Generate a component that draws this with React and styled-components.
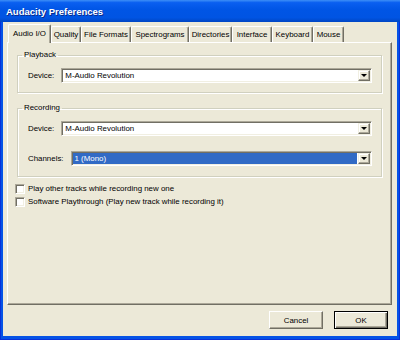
import React from "react";
import styled, { createGlobalStyle } from "styled-components";

const GlobalStyle = createGlobalStyle`
  * { box-sizing: border-box; }
  body {
    margin: 0;
    background: #fff;
    font-family: "Liberation Sans", Arial, sans-serif;
  }
`;

const UI_FONT = `"Liberation Sans", Arial, sans-serif`;

const Window = styled.div`
  width: 400px;
  height: 340px;
  display: flex;
  flex-direction: column;
  background: #0553e6;
  box-shadow: inset 1px 0 0 #0831d9, inset -1px 0 0 #0831d9, inset 0 -1px 0 #0831d9;
  overflow: hidden;
`;

const TitleBar = styled.div`
  height: 22px;
  flex: none;
  display: flex;
  align-items: center;
  padding-left: 6px;
  background: linear-gradient(to bottom, #3d8ff7 0%, #0a5ff0 12%, #0055e5 45%, #0054e3 80%, #0046c4 100%);
  color: #fff;
  font: bold 9.5px ${UI_FONT};
  text-shadow: 1px 1px 0 #0a2a8a;
`;

const Client = styled.div`
  flex: 1;
  margin: 0 3px 4px 3px;
  background: #ece9d8;
  display: flex;
  flex-direction: column;
  padding: 2px 5px 0 4px;
  font: 7.9px ${UI_FONT};
  color: #000;
`;

const TabStrip = styled.div`
  display: flex;
  align-items: flex-end;
  height: 18px;
  padding-left: 1px;
  position: relative;
  z-index: 1;
`;

const Tab = styled.div`
  width: ${(p) => p.w}px;
  height: ${(p) => (p.active ? 19 : 16)}px;
  margin-bottom: ${(p) => (p.active ? -1 : 0)}px;
  display: flex;
  align-items: center;
  justify-content: center;
  padding-bottom: ${(p) => (p.active ? 2 : 0)}px;
  background: #ece9d8;
  border-top: 1px solid #fff;
  border-left: 1px solid #fff;
  border-right: 1px solid #716f64;
  box-shadow: inset -1px 0 0 #aca899;
  border-radius: 2px 2px 0 0;
  white-space: nowrap;
`;

const Panel = styled.div`
  height: 263px;
  flex: none;
  border-top: 1px solid #fff;
  border-left: 1px solid #fff;
  border-right: 1px solid #716f64;
  border-bottom: 1px solid #716f64;
  box-shadow: inset -1px -1px 0 #aca899;
  padding: 0 8px 0 7px;
  display: flex;
  flex-direction: column;
`;

const Group = styled.fieldset`
  margin: ${(p) => p.mt}px 1px 0 2px;
  padding: 8px 9px ${(p) => p.pb}px 10px;
  border: 1px solid #d0d0bf;
  box-shadow: inset 1px 1px 0 #fff, 1px 1px 0 #fff;
  min-width: 0;
`;

const Legend = styled.legend`
  margin-left: -6px;
  padding: 0 2px;
  line-height: 10px;
  height: 10px;
`;

const Rows = styled.div`
  display: flex;
  flex-direction: column;
  gap: 15px;
`;

const Row = styled.div`
  display: flex;
  align-items: center;
`;

const Label = styled.span`
  margin-right: 7px;
  white-space: nowrap;
`;

const DropBox = styled.div`
  flex: 1;
  height: 15px;
  display: flex;
  background: #fff;
  border: 1px solid;
  border-color: #aca899 #fff #fff #aca899;
  box-shadow: inset 1px 1px 0 #716f64, inset -1px -1px 0 #f1efe2;
  padding: 1px;
`;

const Value = styled.div`
  flex: 1;
  display: flex;
  align-items: center;
  padding-left: 2px;
  margin-right: 1px;
  background: ${(p) => (p.selected ? "#316ac5" : "transparent")};
  color: ${(p) => (p.selected ? "#fff" : "#000")};
  white-space: nowrap;
  overflow: hidden;
`;

const ArrowBtn = styled.div`
  width: 12px;
  flex: none;
  display: flex;
  align-items: center;
  justify-content: center;
  background: #ece9d8;
  border: 1px solid;
  border-color: #f1efe2 #716f64 #716f64 #f1efe2;
  box-shadow: inset -1px -1px 0 #aca899, inset 1px 1px 0 #fff;
`;

const Triangle = styled.div`
  width: 0;
  height: 0;
  border-left: 3px solid transparent;
  border-right: 3px solid transparent;
  border-top: 3px solid #000;
`;

const Checks = styled.div`
  margin-top: 5px;
  display: flex;
  flex-direction: column;
`;

const CheckRow = styled.label`
  height: 13px;
  display: flex;
  align-items: center;
  gap: 3px;
  white-space: nowrap;
`;

const Box = styled.span`
  width: 10px;
  height: 10px;
  flex: none;
  background: #fff;
  border: 1px solid;
  border-color: #aca899 #fff #fff #aca899;
  box-shadow: inset 1px 1px 0 #716f64, inset -1px -1px 0 #f1efe2;
`;

const ButtonRow = styled.div`
  display: flex;
  justify-content: flex-end;
  gap: 11px;
  padding: 6px 4px 0 0;
`;

const Button = styled.div`
  width: 54px;
  height: 18px;
  display: flex;
  align-items: center;
  justify-content: center;
  background: #ece9d8;
  border: 1px solid;
  border-color: ${(p) => (p.primary ? "#000" : "#fff #716f64 #716f64 #fff")};
  box-shadow: ${(p) =>
    p.primary
      ? "inset 1px 1px 0 #fff, inset -1px -1px 0 #716f64, inset -2px -2px 0 #aca899"
      : "inset -1px -1px 0 #aca899"};
`;

const tabs = [
  ["Audio I/O", 43],
  ["Quality", 30],
  ["File Formats", 50],
  ["Spectrograms", 58],
  ["Directories", 43],
  ["Interface", 40],
  ["Keyboard", 41],
  ["Mouse", 31],
];

function Dropdown({ value, selected }) {
  return (
    <DropBox>
      <Value selected={selected}>{value}</Value>
      <ArrowBtn>
        <Triangle />
      </ArrowBtn>
    </DropBox>
  );
}

export default function App() {
  return (
    <>
      <GlobalStyle />
      <Window>
        <TitleBar>Audacity Preferences</TitleBar>
        <Client>
          <TabStrip>
            {tabs.map(([t, w], i) => (
              <Tab key={t} w={w} active={i === 0}>
                {t}
              </Tab>
            ))}
          </TabStrip>
          <Panel>
            <Group mt={7} pb={9}>
              <Legend>Playback</Legend>
              <Row>
                <Label>Device:</Label>
                <Dropdown value="M-Audio Revolution" />
              </Row>
            </Group>
            <Group mt={10} pb={10}>
              <Legend>Recording</Legend>
              <Rows>
                <Row>
                  <Label>Device:</Label>
                  <Dropdown value="M-Audio Revolution" />
                </Row>
                <Row>
                  <Label>Channels:</Label>
                  <Dropdown value="1 (Mono)" selected />
                </Row>
              </Rows>
            </Group>
            <Checks>
              <CheckRow>
                <Box />
                Play other tracks while recording new one
              </CheckRow>
              <CheckRow>
                <Box />
                Software Playthrough (Play new track while recording it)
              </CheckRow>
            </Checks>
          </Panel>
          <ButtonRow>
            <Button>Cancel</Button>
            <Button primary>OK</Button>
          </ButtonRow>
        </Client>
      </Window>
    </>
  );
}
